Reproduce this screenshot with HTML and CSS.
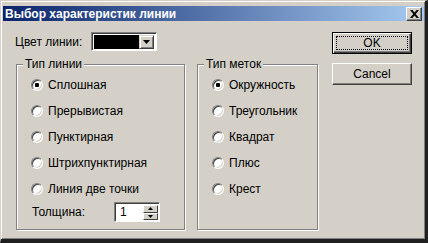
FILE: index.html
```html
<!DOCTYPE html>
<html lang="ru">
<head>
<meta charset="UTF-8">
<title>Выбор характеристик линии</title>
<link rel="stylesheet" href="styles.css">
</head>
<body>
<div class="window">
    <div class="titlebar">
        <span class="title">Выбор характеристик линии</span>
        <span class="close">
            <svg width="9" height="8" viewBox="0 0 9 8"><path d="M0 0h2.4l2.1 2.6L6.6 0H9L5.7 4 9 8H6.6L4.5 5.4 2.4 8H0l3.3-4z" fill="#000"/></svg>
        </span>
    </div>
    <div class="content">
        <div class="main">
            <div class="color-row">
                <span class="label">Цвет линии:</span>
                <span class="combo">
                    <span class="swatch"></span>
                    <span class="drop">
                        <svg width="7" height="4" viewBox="0 0 7 4"><path d="M0 0h7L3.5 4z" fill="#000"/></svg>
                    </span>
                </span>
            </div>
            <div class="groups">
                <fieldset class="group group-line">
                    <legend>Тип линии</legend>
                    <label class="opt"><input type="radio" name="line" checked><span>Сплошная</span></label>
                    <label class="opt"><input type="radio" name="line"><span>Прерывистая</span></label>
                    <label class="opt"><input type="radio" name="line"><span>Пунктирная</span></label>
                    <label class="opt"><input type="radio" name="line"><span>Штрихпунктирная</span></label>
                    <label class="opt"><input type="radio" name="line"><span>Линия две точки</span></label>
                    <div class="width-row">
                        <span class="width-label">Толщина:</span>
                        <span class="spin">
                            <span class="spin-value">1</span>
                            <span class="spin-btns">
                                <span class="spin-btn"><svg width="5" height="3" viewBox="0 0 5 3"><path d="M2.5 0L5 3H0z" fill="#000"/></svg></span>
                                <span class="spin-btn"><svg width="5" height="3" viewBox="0 0 5 3"><path d="M0 0h5L2.5 3z" fill="#000"/></svg></span>
                            </span>
                        </span>
                    </div>
                </fieldset>
                <fieldset class="group group-mark">
                    <legend>Тип меток</legend>
                    <label class="opt"><input type="radio" name="mark" checked><span>Окружность</span></label>
                    <label class="opt"><input type="radio" name="mark"><span>Треугольник</span></label>
                    <label class="opt"><input type="radio" name="mark"><span>Квадрат</span></label>
                    <label class="opt"><input type="radio" name="mark"><span>Плюс</span></label>
                    <label class="opt"><input type="radio" name="mark"><span>Крест</span></label>
                </fieldset>
            </div>
        </div>
        <div class="buttons">
            <button class="btn btn-default"><span class="focus">OK</span></button>
            <button class="btn">Cancel</button>
        </div>
    </div>
</div>
</body>
</html>
```

FILE: styles.css
```css
body {
    margin: 0;
    font-family: "Liberation Sans", Arial, sans-serif;
    font-size: 12px;
    color: #000;
    background: #D4D0C8;
}
.window {
    width: 428px;
    height: 243px;
    box-sizing: border-box;
    background: #D4D0C8;
    border-style: solid;
    border-width: 1px 3px 4px 1px;
    border-color: #D4D0C8 #202020 #202020 #D4D0C8;
    box-shadow: inset 1px 1px 0 #fff, inset -1px -1px 0 #808080;
    padding: 5px 1px 0 2px;
}
.titlebar {
    height: 15px;
    display: flex;
    align-items: center;
    justify-content: space-between;
    padding: 0 2px 0 2px;
    background: linear-gradient(to right, #0A246A, #A6CAF0);
}
.title {
    color: #fff;
    font-weight: bold;
    font-size: 12px;
    line-height: 14px;
}
.close {
    width: 16px;
    height: 14px;
    box-sizing: border-box;
    background: #D4D0C8;
    border: 1px solid;
    border-color: #fff #404040 #404040 #fff;
    box-shadow: inset -1px -1px 0 #808080;
    display: flex;
    align-items: center;
    justify-content: center;
}
.content {
    display: flex;
    padding: 11px 0 0 13px;
}
.main {
    width: 302px;
}
.color-row {
    height: 19px;
    display: flex;
    align-items: center;
}
.label {
    margin-left: -1px;
    width: 76px;
}
.combo {
    width: 66px;
    height: 19px;
    box-sizing: border-box;
    display: flex;
    border: 1px solid;
    border-color: #808080 #fff #fff #808080;
    box-shadow: inset 1px 1px 0 #404040;
    padding: 2px 2px 1px 2px;
    background: #fff;
}
.swatch {
    flex: 1;
    background: #000;
}
.drop {
    width: 15px;
    box-sizing: border-box;
    background: #D4D0C8;
    border: 1px solid;
    border-color: #D4D0C8 #404040 #404040 #D4D0C8;
    box-shadow: inset 1px 1px 0 #fff, inset -1px -1px 0 #808080;
    display: flex;
    align-items: center;
    justify-content: center;
}
.groups {
    display: flex;
    gap: 12px;
    margin-top: 7px;
}
.group {
    margin: 0;
    height: 172px;
    box-sizing: border-box;
    padding: 0 0 0 6px;
    border: 1px solid #808080;
    box-shadow: 1px 1px 0 #fff, inset 1px 1px 0 #fff;
}
.group-line {
    width: 169px;
}
.group-mark {
    width: 121px;
}
.group legend {
    padding: 0 2px;
    line-height: 13px;
    background: #D4D0C8;
}
.opt {
    display: flex;
    align-items: center;
    height: 26px;
    margin-left: 8px;
}
.opt:first-of-type {
    margin-top: 1px;
}
.opt input {
    appearance: none;
    margin: 0 5px 0 0;
    width: 12px;
    height: 12px;
    box-sizing: border-box;
    border-radius: 50%;
    border: 1px solid;
    border-color: #808080 #fff #fff #808080;
    box-shadow: inset 1px 1px 0 #404040, inset -1px -1px 0 #D4D0C8;
    background: #fff;
}
.opt input:checked {
    background: radial-gradient(circle, #000 0 2px, #fff 2.5px);
}
.width-row {
    display: flex;
    align-items: center;
    height: 20px;
    margin-left: 9px;
}
.width-label {
    width: 82px;
}
.spin {
    width: 46px;
    height: 20px;
    box-sizing: border-box;
    display: flex;
    background: #fff;
    border: 1px solid;
    border-color: #808080 #fff #fff #808080;
    box-shadow: inset 1px 1px 0 #404040;
    padding: 2px 1px 1px 2px;
}
.spin-value {
    flex: 1;
    padding-left: 3px;
    line-height: 15px;
}
.spin-btns {
    width: 15px;
    display: flex;
    flex-direction: column;
}
.spin-btn {
    flex: 1;
    box-sizing: border-box;
    background: #D4D0C8;
    border: 1px solid;
    border-color: #fff #404040 #404040 #fff;
    display: flex;
    align-items: center;
    justify-content: center;
}
.buttons {
    display: flex;
    flex-direction: column;
    gap: 9px;
    margin-left: 14px;
    width: 80px;
}
.btn {
    height: 22px;
    width: 80px;
    padding: 0;
    font-family: "Liberation Sans", Arial, sans-serif;
    font-size: 12px;
    color: #000;
    background: #D4D0C8;
    border: 1px solid;
    border-color: #fff #404040 #404040 #fff;
    box-shadow: inset -1px -1px 0 #808080;
}
.btn-default {
    border: 1px solid #000;
    box-shadow: inset 1px 1px 0 #fff, inset -1px -1px 0 #404040, inset -2px -2px 0 #808080;
    padding: 3px;
}
.focus {
    display: flex;
    align-items: center;
    justify-content: center;
    height: 100%;
    box-sizing: border-box;
    border: 1px dotted #000;
}
```
